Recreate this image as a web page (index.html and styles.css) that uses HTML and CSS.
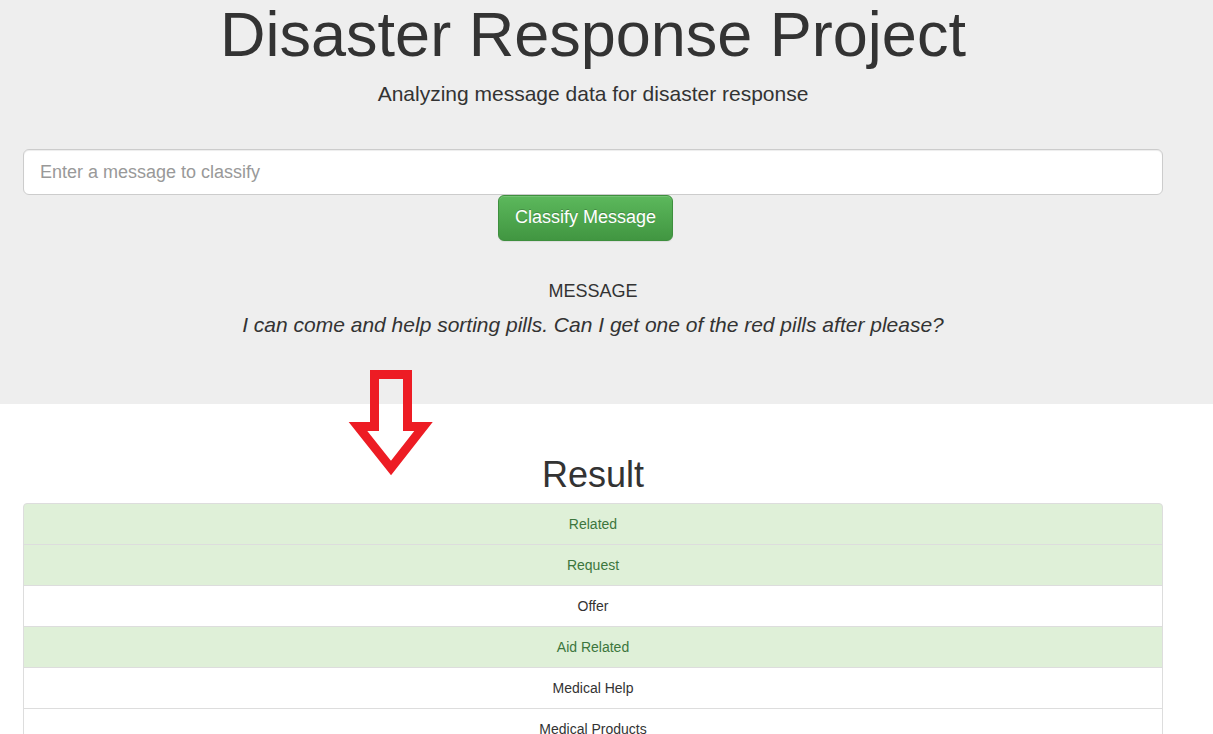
FILE: index.html
```html
<!DOCTYPE html>
<html lang="en">
<head>
<meta charset="utf-8">
<title>Disaster Response Project</title>
<link rel="stylesheet" href="styles.css">
</head>
<body>
<div class="jumbotron">
  <div class="container">
    <h1 class="title">Disaster Response Project</h1>
    <p class="subtitle">Analyzing message data for disaster response</p>
    <form class="classify-form">
      <input class="msg-input" type="text" placeholder="Enter a message to classify">
      <button class="btn-classify" type="button">Classify Message</button>
    </form>
    <h4 class="msg-label">MESSAGE</h4>
    <p class="msg-text">I can come and help sorting pills. Can I get one of the red pills after please?</p>
  </div>
</div>
<svg class="arrow" width="100" height="120" viewBox="0 0 100 120" aria-hidden="true">
  <polygon points="29.5,8.5 62.5,8.5 62.5,60.5 78.5,60.5 46,102 13,60.5 29.5,60.5" fill="none" stroke="#ed1c24" stroke-width="9" stroke-linejoin="miter" stroke-miterlimit="10"/>
</svg>
<div class="container results">
  <h1 class="result-title">Result</h1>
  <ul class="list-group">
    <li class="item success">Related</li>
    <li class="item success">Request</li>
    <li class="item">Offer</li>
    <li class="item success">Aid Related</li>
    <li class="item">Medical Help</li>
    <li class="item">Medical Products</li>
  </ul>
</div>
</body>
</html>
```

FILE: styles.css
```css
html, body {
  margin: 0;
  padding: 0;
}
body {
  font-family: "Liberation Sans", Arial, Helvetica, sans-serif;
  font-size: 14px;
  line-height: 1.42857;
  color: #333;
  background: #fff;
  position: relative;
  overflow: hidden;
  height: 734px;
}
.container {
  width: 1140px;
  margin-left: 23px;
}
.jumbotron {
  background: #eee;
  height: 404px;
  box-sizing: border-box;
}
.title {
  margin: 0;
  font-size: 63px;
  font-weight: 400;
  line-height: 69.3px;
  text-align: center;
}
.subtitle {
  margin: 10px 0 0;
  font-size: 21px;
  line-height: 30px;
  text-align: center;
}
.classify-form {
  margin-top: 40px;
}
.msg-input {
  display: block;
  width: 100%;
  height: 46px;
  box-sizing: border-box;
  padding: 10px 16px;
  font-family: inherit;
  font-size: 18px;
  line-height: 1.33;
  color: #555;
  background: #fff;
  border: 1px solid #ccc;
  border-radius: 6px;
  box-shadow: inset 0 1px 1px rgba(0,0,0,.075);
  outline: none;
}
.msg-input::placeholder {
  color: #999;
}
.btn-classify {
  display: block;
  margin-left: 475px;
  height: 46px;
  padding: 10px 16px;
  font-family: inherit;
  font-size: 18px;
  line-height: 1.33;
  color: #fff;
  text-shadow: 0 -1px 0 rgba(0,0,0,.2);
  background-image: linear-gradient(to bottom, #5cb85c 0, #419641 100%);
  border: 1px solid #3e8f3e;
  border-radius: 6px;
  box-shadow: inset 0 1px 0 rgba(255,255,255,.15), 0 1px 1px rgba(0,0,0,.075);
  cursor: pointer;
}
.msg-label {
  margin: 40px 0 0;
  font-size: 18px;
  font-weight: 400;
  line-height: 20px;
  text-align: center;
}
.msg-text {
  margin: 12px 0 0;
  font-size: 21px;
  font-style: italic;
  line-height: 24px;
  text-align: center;
}
.arrow {
  position: absolute;
  left: 345px;
  top: 366px;
}
.result-title {
  margin: 51px 0 8px;
  font-size: 36px;
  font-weight: 400;
  line-height: 39.6px;
  text-align: center;
}
.list-group {
  list-style: none;
  margin: 0;
  padding: 0;
}
.item {
  padding: 10px 15px;
  line-height: 20px;
  text-align: center;
  background: #fff;
  border: 1px solid #ddd;
  margin-bottom: -1px;
}
.item:first-child {
  border-top-left-radius: 4px;
  border-top-right-radius: 4px;
}
.item.success {
  background: #dff0d8;
  color: #3c763d;
}
```
